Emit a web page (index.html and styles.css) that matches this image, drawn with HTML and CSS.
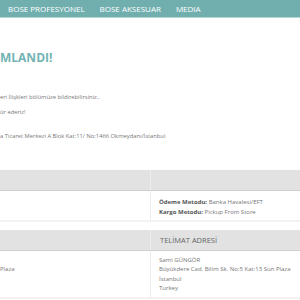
FILE: index.html
```html
<!DOCTYPE html>
<html lang="tr">
<head>
<title>Sipariş Tamamlandı</title>
<meta name="viewport" content="width=device-width, initial-scale=1.0">
<link rel="stylesheet" href="styles.css">
</head>
<body>
<div class="menu">
    <a href="#">BOSE PROFESYONEL</a>
    <a href="#">BOSE AKSESUAR</a>
    <a href="#">MEDIA</a>
</div>

<div class="icerik">
    <h1 class="baslik">MLANDI!</h1>
    <p class="bilgi">eri İlişkleri bölümüze bildirebilirsiniz..</p>
    <p class="bilgi">ür ederiz!</p>
    <p class="bilgi adres">a Ticaret Merkezi A Blok Kat:11/ No:1466 Okmeydanı/İstanbul</p>
</div>

<div class="tablo tablo-ilk">
    <div class="tablo-baslik"></div>
    <div class="tablo-baslik"></div>
    <div class="hucre"></div>
    <div class="hucre">
        <div><b>Ödeme Metodu:</b> Banka Havalesi/EFT</div>
        <div><b>Kargo Metodu:</b> Pickup From Store</div>
    </div>
</div>

<div class="tablo">
    <div class="tablo-baslik"></div>
    <div class="tablo-baslik">TELİMAT ADRESİ</div>
    <div class="hucre hucre-sol">
        <div>&nbsp;</div>
        <div>Plaza</div>
    </div>
    <div class="hucre">
        <div>Sami GÜNGÖR</div>
        <div>Büyükdere Cad. Bilim Sk. No:5 Kat:13 Sun Plaza</div>
        <div>İstanbul</div>
        <div>Turkey</div>
    </div>
</div>
</body>
</html>
```

FILE: styles.css
```css
body {
    margin: 0;
    font-family: "Open Sans", "Liberation Sans", sans-serif;
    color: #777;
    background: #fff;
}

.menu {
    height: 17px;
    background: #71afaf;
    border-bottom: 1px solid #b5d6d6;
    display: flex;
    gap: 15px;
    padding-left: 8px;
}

.menu a {
    color: #fff;
    text-decoration: none;
    font-size: 8px;
    line-height: 17px;
}

.icerik {
    padding-top: 28px;
    height: 152px;
    box-sizing: border-box;
}

.baslik {
    margin: 0 0 23px;
    color: #72b3b3;
    font-size: 12px;
    line-height: 24px;
    font-weight: bold;
}

.bilgi {
    margin: 0 0 6px;
    font-size: 5.8px;
    line-height: 9px;
}

.adres {
    margin-top: 15px;
}

.tablo {
    display: grid;
    grid-template-columns: 150px 1fr;
    border-bottom: 2px solid #f2f2f2;
    font-size: 6px;
    line-height: 9.3px;
}

.tablo-ilk {
    margin-bottom: 8px;
}

.tablo-baslik {
    height: 20px;
    background: #e2e2e2;
    border-bottom: 1px solid #cfcfcf;
    font-size: 7.5px;
    line-height: 20px;
    color: #666;
    padding-left: 9px;
}

.tablo-baslik + .tablo-baslik {
    border-left: 1px solid #ececec;
}

.hucre {
    padding: 5px 0 4px 0;
}

.hucre + .hucre {
    border-left: 1px solid #ececec;
    padding-left: 8px;
}

.tablo-ilk .hucre {
    height: 20px;
    padding-top: 6px;
    padding-bottom: 3px;
    line-height: 10px;
}

.hucre-sol {
    padding-left: 0;
}

.hucre b {
    color: #555;
}
```
